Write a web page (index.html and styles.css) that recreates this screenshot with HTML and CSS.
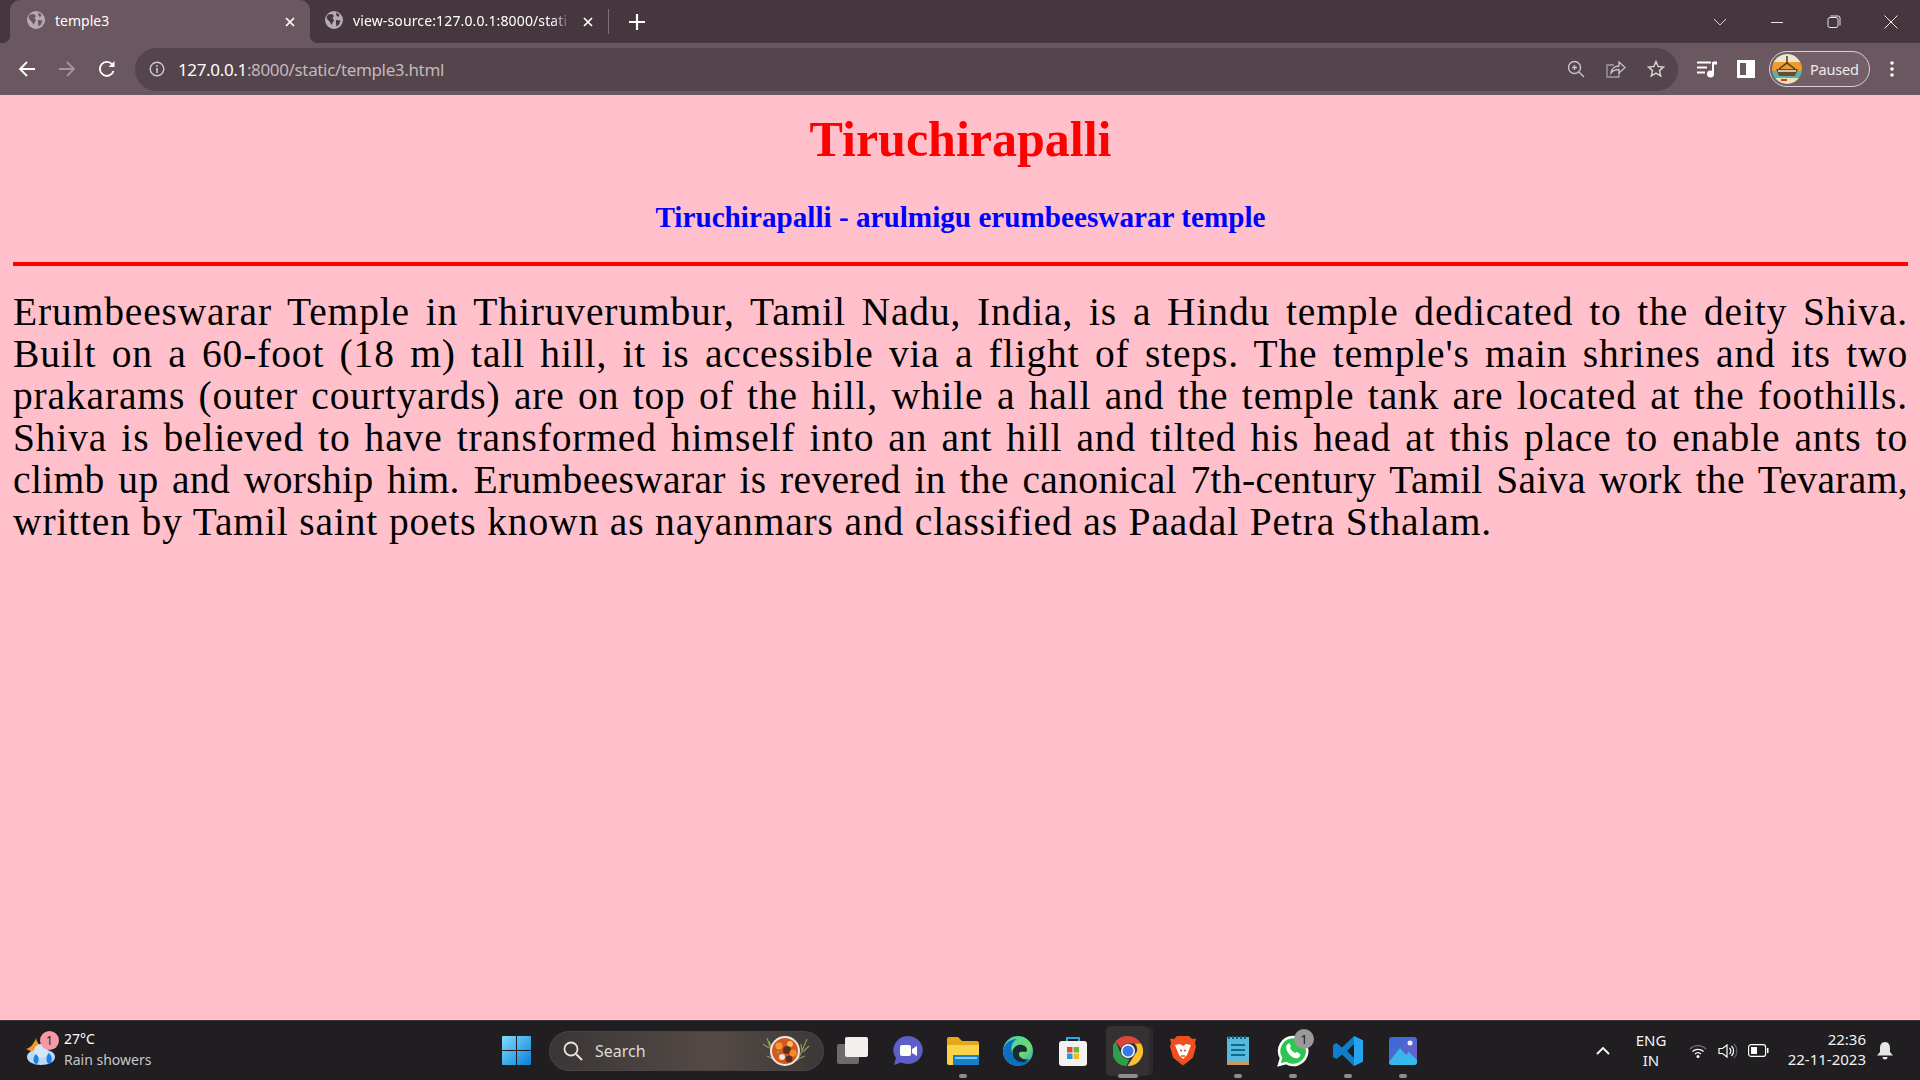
FILE: index.html
```html
<!DOCTYPE html>
<html lang="en">
<head>
<meta charset="utf-8">
<title>temple3</title>
<link rel="stylesheet" href="styles.css">
</head>
<body>
<header class="chrome">
  <div class="tabstrip">
    <div class="tab tab-active">
      <svg class="globe" width="18" height="18" viewBox="0 0 18 18"><circle cx="9" cy="9" r="9" fill="#b5abb0"/><path d="M3 3.500 7 3l2 2-1.500 2L9 9.500l-1 1.500-1.500 3L5 11 2.500 8.500 1.500 6zM11 1.500l3.500 2-1 2.500-2-1zM11 9l4.500.5-1.500 4-2.500 2-.5-3z" fill="#6b5760"/></svg>
      <span class="tab-title">temple3</span>
      <svg class="tab-x" width="12" height="12" viewBox="0 0 12 12"><path d="M2 2l8 8M10 2l-8 8" stroke="#fff" stroke-width="1.700"/></svg>
    </div>
    <div class="tab tab-other">
      <svg class="globe" width="18" height="18" viewBox="0 0 18 18"><circle cx="9" cy="9" r="9" fill="#b5abb0"/><path d="M3 3.500 7 3l2 2-1.500 2L9 9.500l-1 1.500-1.500 3L5 11 2.500 8.500 1.500 6zM11 1.500l3.500 2-1 2.500-2-1zM11 9l4.500.5-1.500 4-2.500 2-.5-3z" fill="#46373f"/></svg>
      <span class="tab-title tab-fade">view-source:127.0.0.1:8000/stati</span>
      <svg class="tab-x" width="12" height="12" viewBox="0 0 12 12"><path d="M2 2l8 8M10 2l-8 8" stroke="#fff" stroke-width="1.700"/></svg>
    </div>
    <span class="tab-sep"></span>
    <svg class="new-tab" width="16" height="16" viewBox="0 0 16 16"><path d="M8 0v16M0 8h16" stroke="#fff" stroke-width="2.200"/></svg>
    <div class="win-controls">
      <svg class="win-chevron" width="14" height="8" viewBox="0 0 14 8"><path d="M1 1l6 6 6-6" fill="none" stroke="#d8d2d5" stroke-width="1"/></svg>
      <svg class="win-btn" width="14" height="14" viewBox="0 0 14 14"><path d="M1 7.500h12" stroke="#e8e4e6" stroke-width="1"/></svg>
      <svg class="win-btn" width="14" height="14" viewBox="0 0 14 14"><rect x="1" y="2.500" width="10" height="10" rx="2" fill="none" stroke="#e8e4e6"/><path d="M3.500 1H11a2 2 0 0 1 2 2v7.500" fill="none" stroke="#e8e4e6"/></svg>
      <svg class="win-btn" width="14" height="14" viewBox="0 0 14 14"><path d="M.5.500l13 13M13.500.500l-13 13" stroke="#f0ecee" stroke-width="1"/></svg>
    </div>
  </div>
  <div class="toolbar">
    <svg class="nav-icon" width="18" height="18" viewBox="0 0 18 18"><path d="M17 9H2M9 2L2 9l7 7" fill="none" stroke="#fff" stroke-width="1.800"/></svg>
    <svg class="nav-icon" width="18" height="18" viewBox="0 0 18 18"><path d="M1 9h15M9 2l7 7-7 7" fill="none" stroke="#a2949b" stroke-width="1.800"/></svg>
    <svg class="nav-icon" width="18" height="18" viewBox="0 0 18 18"><path d="M15.500 11a7 7 0 1 1-1.200-6.500" fill="none" stroke="#fff" stroke-width="1.800"/><path d="M16.500 1v6h-6z" fill="#fff"/></svg>
    <div class="omnibox">
      <svg class="info" width="16" height="16" viewBox="0 0 16 16"><circle cx="8" cy="8" r="6.800" fill="none" stroke="#cfc8cc" stroke-width="1.400"/><path d="M8 7v5M8 4v1.800" stroke="#cfc8cc" stroke-width="1.600"/></svg>
      <span class="url"><span class="url-host">127.0.0.1</span>:8000/static/temple3.html</span>
      <div class="omni-actions">
        <svg width="18" height="18" viewBox="0 0 18 18"><circle cx="7.500" cy="7.500" r="6" fill="none" stroke="#c9c2c6" stroke-width="1.400"/><path d="M12 12l5 5M5 7.500h5M7.500 5v5" stroke="#c9c2c6" stroke-width="1.400"/></svg>
        <svg width="20" height="18" viewBox="0 0 20 18"><path d="M8 5H1v12h12v-4" fill="none" stroke="#a89da3" stroke-width="1.300"/><path d="M5 13c.5-4.500 4-7 8-7V2l6 5.500-6 5.500V9.500c-3.500 0-6 1-8 3.500z" fill="none" stroke="#c9c2c6" stroke-width="1.300"/></svg>
        <svg width="18" height="18" viewBox="0 0 18 18"><path d="M9 1.500l2.200 5 5.300.5-4 3.600 1.200 5.300L9 13.100l-4.700 2.800 1.200-5.300-4-3.600 5.300-.5z" fill="none" stroke="#d4ced1" stroke-width="1.500"/></svg>
      </div>
    </div>
    <svg class="media" width="20" height="18" viewBox="0 0 20 18"><path d="M0 2.500h14M0 7.500h10M0 12.500h8" stroke="#fff" stroke-width="2"/><path d="M16 2v12" stroke="#fff" stroke-width="2"/><path d="M16 1.500h4v3h-4z" fill="#fff"/><circle cx="13.500" cy="14" r="3.500" fill="#fff"/></svg>
    <span class="side-panel"><span class="side-fill"></span></span>
    <div class="profile">
      <svg class="avatar" width="30" height="30" viewBox="0 0 30 30"><defs><clipPath id="av"><circle cx="15" cy="15" r="15"/></clipPath></defs><g clip-path="url(#av)"><rect width="30" height="8" fill="#ece6cf"/><rect y="8" width="30" height="9" fill="#ef9b2d"/><rect y="17" width="30" height="7" fill="#55b5a8"/><rect y="24" width="30" height="6" fill="#efe2b8"/><path d="M4 15h22l-3 7H7z" fill="#6c4a32"/><path d="M7 15l8-6 8 6" fill="none" stroke="#4a3a30" stroke-width="1.500"/><path d="M15 2v8" stroke="#4a3a30" stroke-width="1.500"/><path d="M6 17h18" stroke="#f3ead0" stroke-width="1.500"/><path d="M9 26h6" stroke="#c8402c" stroke-width="2"/></g></svg>
      <span class="profile-label">Paused</span>
    </div>
    <svg class="dots" width="4" height="16" viewBox="0 0 4 16"><circle cx="2" cy="2" r="1.800" fill="#fff"/><circle cx="2" cy="8" r="1.800" fill="#fff"/><circle cx="2" cy="14" r="1.800" fill="#fff"/></svg>
  </div>
</header>

<main class="page">
  <h1 class="title">Tiruchirapalli</h1>
  <h3 class="subtitle">Tiruchirapalli - arulmigu erumbeeswarar temple</h3>
  <hr class="rule">
  <p class="body-text">Erumbeeswarar Temple in Thiruverumbur, Tamil Nadu, India, is a Hindu temple dedicated to the deity Shiva. Built on a 60-foot (18 m) tall hill, it is accessible via a flight of steps. The temple's main shrines and its two prakarams (outer courtyards) are on top of the hill, while a hall and the temple tank are located at the foothills. Shiva is believed to have transformed himself into an ant hill and tilted his head at this place to enable ants to <span class="tight">climb up and worship him. Erumbeeswarar is revered in the canonical 7th-century Tamil Saiva work the Tevaram,</span> written by Tamil saint poets known as nayanmars and classified as Paadal Petra Sthalam.</p>
</main>

<footer class="taskbar">
  <div class="weather">
    <span class="weather-icon">
      <svg width="32" height="32" viewBox="0 0 32 32"><path d="M1 14C5 13 9 9 11 3c1 5 4 8 7 9l-6 7z" fill="#f09a24"/><ellipse cx="16" cy="22" rx="14" ry="8" fill="#bcd9f5"/><circle cx="16" cy="16" r="7" fill="#d5e6f8"/><path d="M11 19c3 3 4 6 1 10-4 0-5-6-1-10zM24 18c3 3 4 7 1 11-4 0-5-7-1-11z" fill="#1b7fe8"/></svg>
      <span class="weather-badge">1</span>
    </span>
    <div class="weather-text">
      <span class="weather-temp">27°C</span>
      <span class="weather-desc">Rain showers</span>
    </div>
  </div>

  <div class="task-center">
    <span class="slot slot-start">
      <svg width="29" height="29" viewBox="0 0 29 29"><defs><linearGradient id="win" x1="0" y1="0" x2="1" y2="1"><stop offset="0" stop-color="#7fdcff"/><stop offset="1" stop-color="#0a7fd8"/></linearGradient></defs><path d="M1 0h13v14H0V1a1 1 0 0 1 1-1zM15 0h13a1 1 0 0 1 1 1v13H15zM0 15h14v14H1a1 1 0 0 1-1-1zM15 15h14v13a1 1 0 0 1-1 1H15z" fill="url(#win)"/></svg>
    </span>
    <div class="search">
      <svg width="20" height="20" viewBox="0 0 20 20"><circle cx="8" cy="8" r="6.500" fill="none" stroke="#e8e4e4" stroke-width="1.800"/><path d="M13 13l6 6" stroke="#e8e4e4" stroke-width="2"/></svg>
      <span class="search-label">Search</span>
      <svg class="search-art" width="56" height="30" viewBox="0 0 56 30"><path d="M10 2l4 12 6 12M6 8l6 4M14 10l-2-5M10 20l8 4M50 3l-5 12-5 10M52 10l-6 6M44 8l1 7M48 20l-7 3" stroke="#8c9a58" stroke-width="1.200" fill="none"/><circle cx="28" cy="15" r="15" fill="#efe9e2"/><circle cx="28" cy="15" r="13" fill="#d8571e"/><circle cx="22" cy="10" r="3.500" fill="#f29a2e"/><circle cx="33" cy="8" r="3" fill="#f2c14e"/><circle cx="30" cy="14" r="4" fill="#5d2e22"/><circle cx="36" cy="17" r="3.500" fill="#f28a2e"/><circle cx="25" cy="21" r="3" fill="#f0e6da"/><circle cx="32" cy="23" r="3.500" fill="#5d2e22"/><circle cx="21" cy="16" r="1.500" fill="#6cab3a"/></svg>
    </div>
    <span class="slot slot-first">
      <svg width="32" height="30" viewBox="0 0 32 30"><rect x="0" y="8" width="22" height="20" rx="2" fill="#6e6a68"/><rect x="8" y="1" width="23" height="20" rx="2" fill="#f2f0ee"/></svg>
    </span>
    <span class="slot">
      <svg width="30" height="30" viewBox="0 0 30 30"><path d="M15 0a15 14 0 1 1-7 26.500L1 29l2-7A15 14 0 0 1 15 0z" fill="#5b5fc7"/><rect x="7" y="9" width="11" height="11" rx="2" fill="#fff"/><path d="M19 13l5-3v10l-5-3z" fill="#fff"/></svg>
    </span>
    <span class="slot is-open">
      <svg width="32" height="28" viewBox="0 0 32 28"><path d="M0 2a2 2 0 0 1 2-2h9l4 4h15a2 2 0 0 1 2 2v4H0z" fill="#e5a81a"/><path d="M0 8h32v18a2 2 0 0 1-2 2H2a2 2 0 0 1-2-2z" fill="#fbd34b"/><rect x="6" y="18" width="26" height="10" fill="#1580c9"/><rect x="8" y="20" width="22" height="2" fill="#7fd0f0"/></svg>
    </span>
    <span class="slot">
      <svg width="30" height="30" viewBox="0 0 30 30"><defs><linearGradient id="edge" x1="0" y1="0" x2="1" y2="1"><stop offset="0" stop-color="#3fd0c0"/><stop offset=".6" stop-color="#6fdc6a"/><stop offset="1" stop-color="#2a9fd8"/></linearGradient></defs><circle cx="15" cy="15" r="15" fill="url(#edge)"/><path d="M0 15C1 7 8 3 14 3c-6 3-7 10-4 15 3 6 10 9 17 5-3 5-8 7-12 7C7 30 0 23 0 15z" fill="#0c6fc2"/><path d="M10 19c-2-6 3-11 9-10 5 1 6 5 4 7-3 0-7-1-7 2 0 4 5 6 9 5l-3 3c-6 1-11-2-12-7z" fill="#1e2a33"/></svg>
    </span>
    <span class="slot">
      <svg width="30" height="30" viewBox="0 0 30 30"><path d="M9 6V2h12v4" fill="none" stroke="#29a8e8" stroke-width="2"/><rect x="1" y="5" width="28" height="25" rx="3" fill="#f4f2f0"/><rect x="9" y="11" width="5.500" height="5.500" fill="#e8492c"/><rect x="15.500" y="11" width="5.500" height="5.500" fill="#6cb82c"/><rect x="9" y="17.500" width="5.500" height="5.500" fill="#1c9be8"/><rect x="15.500" y="17.500" width="5.500" height="5.500" fill="#fbb81c"/></svg>
    </span>
    <span class="slot slot-active">
      <svg width="30" height="30" viewBox="0 0 30 30"><path d="M15 0a15 15 0 0 1 13 7.500H15a7.500 7.500 0 0 0-7 5L2.500 5.500A15 15 0 0 1 15 0z" fill="#db4437"/><path d="M28 7.500A15 15 0 0 1 14.500 30L21.500 19A7.500 7.500 0 0 0 21.500 7.500z" fill="#fbc02d"/><path d="M2.500 5.500L8.500 19a7.500 7.500 0 0 0 8 3.500L13.500 30A15 15 0 0 1 2.500 5.500z" fill="#2e9e4c"/><circle cx="15" cy="15" r="7" fill="#fff"/><circle cx="15" cy="15" r="5.500" fill="#3b78e7"/></svg>
    </span>
    <span class="slot">
      <svg width="26" height="30" viewBox="0 0 26 30"><path d="M7 0h12l3 3 4-.5-1 5 1 3-3 11-6 5-4 3-4-3-6-5L0 10.500l1-3-1-5 4 .5z" fill="#f04e1e"/><path d="M5 9l5-1 3 2 3-2 5 1-2 5-2 5-4 4-4-4-2-5z" fill="#fff"/><path d="M10 14l2 1M16 14l-2 1M11 20h4" stroke="#f04e1e" stroke-width="1.500"/></svg>
    </span>
    <span class="slot is-open">
      <svg width="24" height="31" viewBox="0 0 24 31"><rect x="1" y="2" width="22" height="27" fill="#58b9de"/><rect x="1" y="26" width="22" height="4" fill="#c89a62"/><path d="M3 1v3M7 1v3M11 1v3M15 1v3M19 1v3" stroke="#12627f" stroke-width="2"/><path d="M5 10h14M5 15h14M5 20h14" stroke="#0e6a8f" stroke-width="1.800"/></svg>
    </span>
    <span class="slot is-open slot-badge">
      <svg width="32" height="32" viewBox="0 0 32 32"><path d="M16 2a14 14 0 1 1-7 26L2 30l2-7A14 14 0 0 1 16 2z" fill="#2fc551" stroke="#fff" stroke-width="2.500"/><path d="M11 9c-3 2-2 6 1 10s7 5 9 4 3-3 2-4l-3-2-2 1c-2-1-4-3-5-5l1-2-2-3z" fill="#fff"/></svg>
      <span class="app-badge">1</span>
    </span>
    <span class="slot is-open">
      <svg width="30" height="30" viewBox="0 0 30 30"><path d="M21 0l9 4.500v21L21 30 9 18.500 3.500 23 0 21V9l3.500-2L9 11.500z" fill="#0f7fcc"/><path d="M21 0l9 4.500v21L21 30z" fill="#26a4ee"/><path d="M21 8l-7 7 7 7z" fill="#1f1d20"/></svg>
    </span>
    <span class="slot is-open">
      <svg width="28" height="28" viewBox="0 0 28 28"><defs><linearGradient id="photo" x1="0" y1="0" x2="1" y2="1"><stop offset="0" stop-color="#2f6fd8"/><stop offset="1" stop-color="#7a5ac8"/></linearGradient></defs><rect width="28" height="28" rx="3" fill="url(#photo)"/><path d="M0 25L11 11l6 7 3-3 8 8v2a3 3 0 0 1-3 3H3a3 3 0 0 1-3-3z" fill="#37b8ea"/><circle cx="21" cy="6" r="2.500" fill="#e8f0fa"/></svg>
    </span>
  </div>

  <div class="tray">
    <svg class="tray-caret" width="14" height="9" viewBox="0 0 14 9"><path d="M1 8l6-6 6 6" fill="none" stroke="#fff" stroke-width="1.800"/></svg>
    <div class="lang"><span>ENG</span><span>IN</span></div>
    <svg width="18" height="16" viewBox="0 0 18 16"><path d="M1 6a11 11 0 0 1 16 0" fill="none" stroke="#77737a" stroke-width="1.300"/><path d="M3.500 8.500a8 8 0 0 1 11 0M6 11a4.500 4.500 0 0 1 6 0" fill="none" stroke="#fff" stroke-width="1.300"/><circle cx="9" cy="13.500" r="1.500" fill="#fff"/></svg>
    <svg class="tray-vol" width="20" height="16" viewBox="0 0 20 16"><path d="M1 5.500h3.500L9 2v12l-4.500-3.500H1z" fill="none" stroke="#fff" stroke-width="1.200"/><path d="M11.500 5a4 4 0 0 1 0 6M13.500 3a7 7 0 0 1 0 10" fill="none" stroke="#fff" stroke-width="1.200"/><path d="M16 1a10 10 0 0 1 0 14" fill="none" stroke="#66626a" stroke-width="1.200"/></svg>
    <svg class="tray-batt" width="21" height="13" viewBox="0 0 21 13"><rect x=".6" y=".6" width="17" height="11.800" rx="2.500" fill="none" stroke="#fff" stroke-width="1.200"/><rect x="3" y="3" width="6" height="7" fill="#fff"/><path d="M19 4h1.500v5H19z" fill="#fff"/></svg>
    <div class="clock"><span>22:36</span><span>22-11-2023</span></div>
    <svg class="tray-bell" width="16" height="18" viewBox="0 0 16 18"><path d="M8 0c3.500 0 5 3 5 6v4l3 3.500H0L3 10V6c0-3 1.500-6 5-6z" fill="#e6e6e6"/><path d="M5.500 15h5a2.500 2.500 0 0 1-5 0z" fill="#e6e6e6"/></svg>
  </div>
</footer>
</body>
</html>
```

FILE: styles.css
```css
* { box-sizing: border-box; }
html, body { height: 100%; }
body {
  margin: 0;
  height: 1080px;
  width: 1920px;
  overflow: hidden;
  display: flex;
  flex-direction: column;
  background: #ffc0cb;
  font-family: "Noto Sans", sans-serif;
  color: #fff;
}
svg { display: block; flex: none; }

/* browser chrome */
.chrome { flex: none; }
.tabstrip {
  height: 43px;
  background: #46373f;
  display: flex;
  align-items: center;
  padding-left: 10px;
}
.tab {
  position: relative;
  width: 300px;
  height: 43px;
  display: flex;
  align-items: center;
  padding: 0 14px 3px 17px;
  font-size: 14px;
  white-space: nowrap;
}
.tab svg.tab-x { margin-top: 3px; }
.tab-active {
  background: #6b5760;
  border-radius: 10px 10px 0 0;
}
.tab-active::before, .tab-active::after {
  content: "";
  position: absolute;
  bottom: 0;
  width: 8px;
  height: 8px;
}
.tab-active::before { left: -8px; background: radial-gradient(circle at 0 0, #46373f 8px, #6b5760 8.5px); }
.tab-active::after { right: -8px; background: radial-gradient(circle at 100% 0, #46373f 8px, #6b5760 8.5px); }
.tab-other { width: 298px; padding-left: 15px; }
.tab-title { margin-left: 10px; flex: 1; white-space: nowrap; }
.tab-fade {
  letter-spacing: 0.13px;
  -webkit-mask-image: linear-gradient(90deg, #000 90%, transparent 99%);
  mask-image: linear-gradient(90deg, #000 90%, transparent 99%);
}
.tab-x { margin-left: 8px; }
.tab-sep { width: 1px; height: 25px; background: #7d6e76; }
.new-tab { margin-left: 20px; }
.win-controls {
  margin-left: auto;
  display: flex;
  align-items: center;
  padding-right: 22px;
}
.win-chevron { margin-right: 43px; }
.win-btn { margin-left: 43px; }
.win-chevron + .win-btn { margin-left: 0; }

.toolbar {
  height: 52px;
  background: #6b5760;
  display: flex;
  align-items: center;
  padding: 0 0 0 18px;
}
.nav-icon { margin-right: 22px; }
.omnibox {
  width: 1543px;
  height: 43px;
  margin-left: -3px;
  background: #54444c;
  border-radius: 22px;
  display: flex;
  align-items: center;
  padding: 0 13px 0 14px;
}
.url {
  margin-left: 13px;
  font-size: 17px;
  letter-spacing: -0.35px;
  color: #c3b9be;
}
.url-host { color: #fff; }
.omni-actions {
  margin-left: auto;
  display: flex;
  align-items: center;
  gap: 21px;
}
.media { margin-left: 19px; }
.side-panel {
  width: 18px;
  height: 18px;
  margin-left: 20px;
  border: 3px solid #fff;
  display: block;
  flex: none;
}
.side-fill { display: block; width: 50%; height: 100%; margin-left: 50%; background: #fff; }
.profile {
  width: 101px;
  height: 36px;
  margin-left: 14px;
  border: 1.5px solid #d9d2d6;
  border-radius: 18px;
  background: #745f68;
  display: flex;
  align-items: center;
  padding-left: 2px;
  flex: none;
}
.profile-label { margin-left: 8px; font-size: 14.5px; letter-spacing: -0.2px; color: #efe9ec; }
.dots { margin-left: 20px; }

/* page */
.page {
  flex: 1;
  padding: 0 12px 0 13px;
  background: #ffc0cb;
  color: #000;
  font-family: "Liberation Serif", serif;
  min-height: 0;
}
.title {
  margin: 17px 0 0;
  font-size: 50px;
  line-height: 54px;
  text-align: center;
  color: #f00;
}
.subtitle {
  margin: 33px 0 0;
  font-size: 29.2px;
  line-height: 36px;
  text-align: center;
  color: #00f;
}
.rule {
  margin: 27px 0 0;
  height: 4px;
  border: 0;
  background: #f00;
}
.body-text {
  margin: 25px 0 0;
  font-size: 39.5px;
  letter-spacing: 0.85px;
  line-height: 42px;
  text-align: justify;
}
.tight { letter-spacing: 0.35px; }

/* taskbar */
.taskbar {
  flex: none;
  height: 60px;
  background: #201e21;
  border-top: 1px solid #3a3638;
  display: flex;
  align-items: center;
}
.weather {
  width: 504px;
  flex: none;
  display: flex;
  align-items: center;
  padding-left: 25px;
}
.weather-icon { position: relative; width: 32px; height: 32px; }
.weather-badge {
  position: absolute;
  top: -4px;
  left: 15px;
  width: 19px;
  height: 19px;
  border-radius: 50%;
  background: #f898a4;
  color: #2a1a1e;
  font-size: 12px;
  line-height: 19px;
  text-align: center;
}
.weather-text { display: flex; flex-direction: column; margin-left: 7px; line-height: 20px; padding-bottom: 3px; }
.weather-temp { font-size: 14px; margin-bottom: 1px; }
.weather-desc { font-size: 14px; color: #c9c7c8; }

.task-center { display: flex; align-items: center; height: 100%; }
.slot {
  position: relative;
  width: 55px;
  height: 100%;
  display: flex;
  align-items: center;
  justify-content: center;
}
.slot-start { margin-left: -15px; margin-right: -13px; }
.search {
  width: 275px;
  height: 40px;
  margin-left: 18px;
  border-radius: 20px;
  border: 1px solid #4a4544;
  background: linear-gradient(90deg, #3a3636, #544a46 60%, #3c3838);
  display: flex;
  align-items: center;
  padding: 0 10px 0 13px;
}
.search-label { margin-left: 12px; font-size: 16px; color: #dedada; }
.search-art { margin-left: auto; }
.slot-first { margin-left: 1px; }
.is-open::after, .slot-active::after {
  content: "";
  position: absolute;
  left: 50%;
  bottom: 2px;
  width: 8px;
  height: 4px;
  margin-left: -4px;
  border-radius: 2px;
  background: #8e8c8d;
}
.slot-active::after { width: 20px; margin-left: -10px; }
.slot-active::before {
  content: "";
  position: absolute;
  left: 6px;
  top: 5px;
  width: 43px;
  height: 50px;
  border-radius: 5px;
  background: #343133;
  box-shadow: 5px 0 0 -1px #2b292b;
}
.slot-active svg { position: relative; }
.app-badge {
  position: absolute;
  top: 8px;
  left: 29px;
  width: 20px;
  height: 20px;
  border-radius: 50%;
  background: #9c9a98;
  color: #1c1c1c;
  font-size: 13px;
  line-height: 20px;
  text-align: center;
}
.tray {
  margin-left: auto;
  display: flex;
  align-items: center;
  padding-right: 27px;
}
.lang {
  margin-left: 24px;
  margin-right: 21px;
  width: 34px;
  display: flex;
  flex-direction: column;
  align-items: center;
  font-size: 15px;
  line-height: 20px;
  padding-bottom: 2px;
  color: #f2f2f2;
}
.tray-vol { margin-left: 11px; }
.tray-batt { margin-left: 10px; }
.clock {
  width: 90px;
  margin-left: 7px;
  display: flex;
  flex-direction: column;
  align-items: flex-end;
  font-size: 15px;
  line-height: 20px;
  padding-bottom: 4px;
  color: #f2f2f2;
  white-space: nowrap;
}
.tray-bell { margin-left: 11px; }
```
